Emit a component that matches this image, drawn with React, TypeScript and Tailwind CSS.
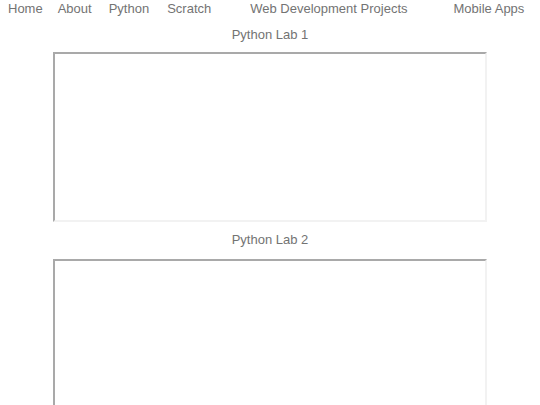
const links = [
  { label: 'Home', cls: 'ml-[8px]' },
  { label: 'About', cls: 'ml-[15px]' },
  { label: 'Python', cls: 'ml-[17px]' },
  { label: 'Scratch', cls: 'ml-[18px]' },
  { label: 'Web Development Projects', cls: 'ml-[39px]' },
  { label: 'Mobile Apps', cls: 'ml-[46px]' },
];

function LabFrame({ title, first }: { title: string; first?: boolean }) {
  return (
    <section className="flex flex-col items-center">
      <h2 className={`${first ? 'mt-[8px]' : 'mt-[9px]'} text-[13px] leading-[18px] font-normal`}>
        {title}
      </h2>
      <div
        className={`${first ? 'mt-[8px]' : 'mt-[10px]'} w-[434px] h-[170px] border-2 border-t-[#a9a9a9] border-l-[#a9a9a9] border-r-[#f2f2f2] border-b-[#f2f2f2] bg-white`}
      />
    </section>
  );
}

export default function App() {
  return (
    <div className="w-[540px] h-[405px] overflow-hidden bg-white text-[#737373] font-['Liberation_Sans',Arial,sans-serif]">
      <nav className="flex h-[18px] text-[13px] leading-[18px] whitespace-nowrap">
        {links.map((l) => (
          <a key={l.label} href="#" className={`${l.cls} text-[#737373] no-underline`}>
            {l.label}
          </a>
        ))}
      </nav>
      <LabFrame title="Python Lab 1" first />
      <LabFrame title="Python Lab 2" />
    </div>
  );
}
